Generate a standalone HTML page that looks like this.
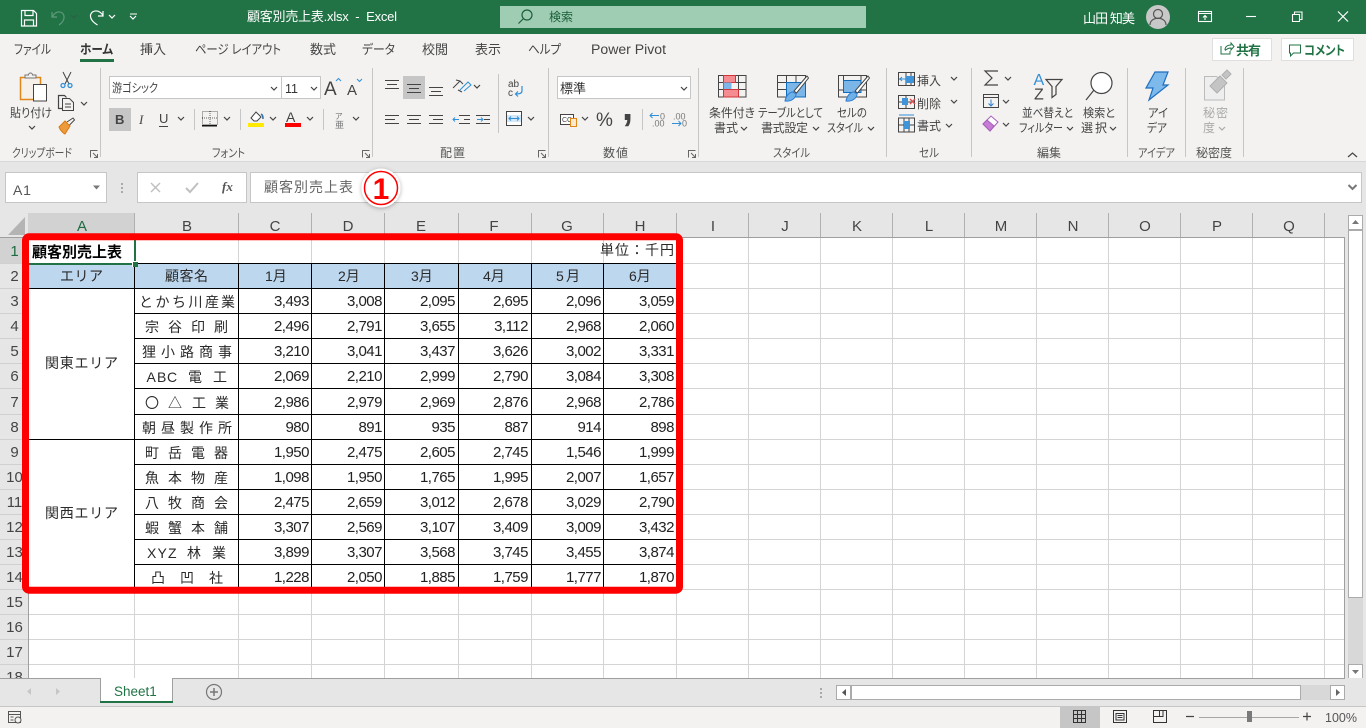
<!DOCTYPE html>
<html lang="ja"><head><meta charset="utf-8"><title>顧客別売上表.xlsx - Excel</title>
<style>
html,body{margin:0;padding:0;width:1366px;height:728px;overflow:hidden;background:#e6e6e6}
svg{display:block}
text{font-family:"Liberation Sans","Noto Sans CJK JP",sans-serif;font-feature-settings:"palt";white-space:pre}
.r{font-size:12px;fill:#444}
.g{font-size:12px;fill:#555}
.t{font-size:13px;fill:#444}
.n text{font-size:15px;letter-spacing:-.5px;fill:#222;text-anchor:end}
.c text{font-size:14px;fill:#2a2a2a;font-feature-settings:normal}
.h text{font-size:15px;fill:#444;text-anchor:middle}
.i{fill:none;stroke:#444;stroke-width:1}
</style></head><body>
<svg width="1366" height="728" viewBox="0 0 1366 728" xmlns="http://www.w3.org/2000/svg">
<defs>
<path id="c" d="M0 0l3 3 3-3" fill="none" stroke="#444" stroke-width="1.2"/>
<path id="cw" d="M0 0l3 3 3-3" fill="none" stroke="#fff" stroke-width="1.2"/>
<path id="dl" d="M.5 7.500v-7h7M3 3l4 4M7.500 4v3.500H4" fill="none" stroke="#666" stroke-width="1"/>
<filter id="sh" x="-30%" y="-30%" width="160%" height="160%"><feDropShadow dx="0" dy="1" stdDeviation="2" flood-color="#000" flood-opacity=".3"/></filter>
</defs>

<!-- title bar -->
<rect width="1366" height="34" fill="#217346"/>
<g fill="none" stroke="#fff" stroke-width="1.2">
<path d="M21.5 10.5h12l3 3v12.5h-15z M25 10.5v5h8v-5 M24.5 26v-6h9v6"/>
<path d="M52 12v5h5 M52.5 16.5C56 10 63 11 64 16c.5 4-2 7-5 9" stroke="#5f9a7c"/>
<path d="M103 11v5h-5 M103 15.5C99 9 92 10 90.500 15c-.5 5 4 8 7 10"/>
</g>
<use href="#c" x="71" y="15" opacity=".4"/><use href="#cw" x="109" y="15"/>
<path d="M130 14h7" stroke="#fff"/><use href="#cw" x="130" y="16"/>
<text x="247" y="21" font-size="13" fill="#fff" textLength="150" lengthAdjust="spacing">顧客別売上表.xlsx  -  Excel</text>
<rect x="500" y="6" width="366" height="22" fill="#9fcdb3"/>
<circle cx="527" cy="15" r="5" fill="none" stroke="#1b5e3a" stroke-width="1.200"/><path d="M523 19l-4.500 4.500" stroke="#1b5e3a" stroke-width="1.200"/>
<text x="549" y="21" font-size="12" fill="#1b5e3a">検索</text>
<text x="1083" y="23" font-size="13" fill="#fff" textLength="52">山田 知美</text>
<circle cx="1158" cy="17" r="12" fill="#c8c8c8"/>
<circle cx="1158" cy="14" r="4.500" fill="none" stroke="#555" stroke-width="1.200"/><path d="M1150 25c0-9 16-9 16 0" fill="none" stroke="#555" stroke-width="1.200"/>
<g fill="none" stroke="#fff" stroke-width="1.100">
<rect x="1198.500" y="11.500" width="13" height="10"/><path d="M1198.500 13.500h13M1205 20v-4M1203 17.500l2-2 2 2"/>
<path d="M1246 16.500h10"/>
<path d="M1292.500 14.500h7v7h-7zM1294.500 14.500v-2.500h7.500v7.500h-2.500"/>
<path d="M1338 11.500l10 10M1348 11.500l-10 10" stroke-width="1.200"/>
</g>

<!-- ribbon -->
<rect y="34" width="1366" height="127" fill="#f3f2f1"/>
<rect y="161" width="1366" height="52" fill="#e6e6e6"/>
<rect y="161" width="1366" height="1" fill="#d8d8d8"/>
<text x="14" y="54" class="t" textLength="37" lengthAdjust="spacingAndGlyphs">ファイル</text>
<text x="80" y="54" class="t" style="font-weight:700;fill:#333" textLength="33" lengthAdjust="spacingAndGlyphs">ホーム</text>
<rect x="80" y="59" width="34" height="3" fill="#217346"/>
<text x="140" y="54" class="t" textLength="26">挿入</text>
<text x="195" y="54" class="t" textLength="86" lengthAdjust="spacingAndGlyphs">ページ レイアウト</text>
<text x="310" y="54" class="t" textLength="26">数式</text>
<text x="362" y="54" class="t" textLength="33" lengthAdjust="spacingAndGlyphs">データ</text>
<text x="422" y="54" class="t" textLength="26">校閲</text>
<text x="475" y="54" class="t" textLength="26">表示</text>
<text x="528" y="54" class="t" textLength="33" lengthAdjust="spacingAndGlyphs">ヘルプ</text>
<text x="591" y="54" class="t" style="font-size:13.500px" textLength="75" lengthAdjust="spacingAndGlyphs">Power Pivot</text>
<g fill="#fff" stroke="#e1dfdd"><rect x="1212.500" y="38.500" width="59" height="22"/><rect x="1281.500" y="38.500" width="72" height="22"/></g>
<path d="M1221 46v8h9v-3M1225 50c0-3 2-5 6-5v-2l3 3.500-3 3.500v-2c-3 0-4 1-6 2.500" fill="none" stroke="#217346"/>
<text x="1236" y="55" font-size="13" font-weight="700" fill="#217346" textLength="25">共有</text>
<path d="M1289.500 45h11v8h-7l-3 3v-3h-1z" fill="none" stroke="#217346"/>
<text x="1304" y="55" font-size="13" font-weight="700" fill="#217346" textLength="41" lengthAdjust="spacingAndGlyphs">コメント</text>
<g fill="#c6c6c6"><rect x="100" y="68" width="1" height="89"/><rect x="372" y="68" width="1" height="89"/><rect x="548" y="68" width="1" height="89"/><rect x="698" y="68" width="1" height="89"/><rect x="886" y="68" width="1" height="89"/><rect x="971" y="68" width="1" height="89"/><rect x="1127" y="68" width="1" height="89"/><rect x="1185" y="68" width="1" height="89"/><rect x="1243" y="68" width="1" height="89"/>
<rect x="194" y="109" width="1" height="21"/><rect x="240" y="109" width="1" height="21"/><rect x="323" y="109" width="1" height="21"/><rect x="498" y="74" width="1" height="59"/><rect x="642" y="109" width="1" height="21"/></g>
<!-- group labels -->
<g class="gl">
<text x="12" y="157" class="g" textLength="60" lengthAdjust="spacingAndGlyphs">クリップボード</text>
<text x="212" y="157" class="g" textLength="33" lengthAdjust="spacingAndGlyphs">フォント</text>
<text x="440" y="157" class="g" textLength="25">配置</text>
<text x="603" y="157" class="g" textLength="25">数値</text>
<text x="773" y="157" class="g" textLength="37" lengthAdjust="spacingAndGlyphs">スタイル</text>
<text x="919" y="157" class="g" textLength="20" lengthAdjust="spacingAndGlyphs">セル</text>
<text x="1037" y="157" class="g" textLength="24">編集</text>
<text x="1138" y="157" class="g" textLength="37" lengthAdjust="spacingAndGlyphs">アイデア</text>
<text x="1196" y="157" class="g" textLength="36">秘密度</text>
</g>
<use href="#dl" x="90" y="150"/><use href="#dl" x="362" y="150"/><use href="#dl" x="538" y="150"/><use href="#dl" x="688" y="150"/>
<path d="M1348 157l4.500-4 4.500 4" fill="none" stroke="#444" stroke-width="1.200"/>

<!-- clipboard -->
<rect x="20.500" y="77.500" width="20" height="22" fill="#f6f0e8" stroke="#e0861a" stroke-width="1.500"/>
<path d="M25 77v-2h3.500a2 2 0 0 1 4 0H36v3H25z" fill="#f3f2f1" stroke="#777"/>
<rect x="33.500" y="84.500" width="13" height="16.500" fill="#fff" stroke="#444"/>
<text x="10" y="117" class="r" textLength="42" lengthAdjust="spacingAndGlyphs">貼り付け</text><use href="#c" x="29" y="126"/>
<path d="M63 72l6 12M71 72l-6 12" stroke="#444" fill="none"/><circle cx="63" cy="85.500" r="2" fill="none" stroke="#2f8fd8" stroke-width="1.300"/><circle cx="70" cy="85.500" r="2" fill="none" stroke="#2f8fd8" stroke-width="1.300"/>
<path d="M62 108.500h-3.500v-13h6l2 2" class="i" style="stroke-width:1.200"/><path d="M62.500 98.500h7l4 4v8h-11zM65 104h6M65 107h6" class="i"/><use href="#c" x="81" y="102"/>
<path d="M59 127l6-6 5 5-5 8c-2-1-5-4-6-7z" fill="#ed9a3c" stroke="#d87a10"/><path d="M67 122l6-4 1.500 2-5 5" fill="#f3f2f1" stroke="#444"/>

<!-- font -->
<rect x="109.500" y="76.500" width="172" height="22" fill="#fff" stroke="#c6c6c6"/><rect x="281.500" y="76.500" width="39" height="22" fill="#fff" stroke="#c6c6c6"/>
<text x="112" y="92" class="r" textLength="46" lengthAdjust="spacingAndGlyphs">游ゴシック</text><use href="#c" x="271" y="87"/>
<text x="285" y="93" font-size="12.500" fill="#333">11</text><use href="#c" x="311" y="87"/>
<text x="324" y="95" font-size="19" fill="#444">A</text><path d="M336 81l2.500-2.500 2.500 2.500" fill="none" stroke="#2f8fd8"/>
<text x="347" y="95" font-size="15" fill="#444">A</text><path d="M357 79l2.500 2.500 2.500-2.500" fill="none" stroke="#2f8fd8"/>
<rect x="109" y="108" width="22" height="23" fill="#c6c6c6"/>
<text x="115" y="124" font-size="13" font-weight="700" fill="#444">B</text>
<text x="139" y="124" font-size="13" font-style="italic" fill="#444" style="font-family:'Liberation Serif',serif">I</text>
<text x="159" y="123" font-size="13" fill="#444">U</text><rect x="159" y="126" width="9" height="1" fill="#444"/><use href="#c" x="178" y="117"/>
<rect x="202.500" y="111.500" width="15" height="13" fill="none" stroke="#666" stroke-dasharray="1 1"/><path d="M210 111v14M202 118h16" stroke="#666" stroke-dasharray="1 1"/><rect x="202" y="125" width="15" height="1.500" fill="#111"/><use href="#c" x="224" y="117"/>
<path d="M251 118l5-6 5 5-4 4h-3z" fill="#fff" stroke="#444"/><path d="M261 114c2 1 2 3 2 5" stroke="#2f6fb0" stroke-width="1.500" fill="none"/><rect x="248" y="123" width="16" height="4" fill="#ffea00"/><use href="#c" x="270" y="117"/>
<text x="286" y="122" font-size="14" fill="#444">A</text><rect x="285" y="123" width="16" height="4" fill="#f00"/><use href="#c" x="307" y="117"/>
<text x="335" y="119" font-size="8" fill="#777">ア</text><text x="335" y="128" font-size="9" fill="#777">亜</text><use href="#c" x="353" y="117"/>

<!-- alignment -->
<rect x="403" y="76" width="22" height="23" fill="#c6c6c6"/>
<g stroke="#444" fill="none">
<path d="M385 80.500h14M387 84.500h10M385 88.500h14"/><path d="M407 84.500h14M409 88.500h10M407 92.500h14"/><path d="M429 87.500h14M431 91.500h10M429 95.500h14"/>
<path d="M385 115.500h14M385 119.500h10M385 123.500h14"/><path d="M407 115.500h14M409 119.500h10M407 123.500h14"/><path d="M429 115.500h14M433 119.500h10M429 123.500h14"/>
<path d="M459 115.500h11M464 119.500h6M459 123.500h11M476 115.500h14M484 119.500h6M476 123.500h14"/>
<path d="M453 88l7-7M456 80l4 1 3 3M462 92l-4-2"/><path d="M460 90l8-8 3 3-7 6" stroke="#2f8fd8"/>
</g>
<path d="M453 119.500h6M455 117.500l-2 2 2 2M477 119.500h6M481 117.500l2 2-2 2" stroke="#2f8fd8" fill="none"/>
<use href="#c" x="474" y="85"/>
<text x="508" y="87" font-size="10" fill="#444">ab</text><text x="508" y="96" font-size="10" fill="#444">c</text><path d="M522 86v5c0 2-2 3-6 3M518 91.500l-2.500 2.500 2.500 2.500" fill="none" stroke="#2f8fd8" stroke-width="1.200"/>
<rect x="506.500" y="111.500" width="15" height="14" fill="#fff" stroke="#444"/><rect x="507" y="115" width="14" height="7" fill="#d5e8f7"/><path d="M509 118.500h10M511 116.500l-2 2 2 2M517 116.500l2 2-2 2" stroke="#2f8fd8" fill="none"/><use href="#c" x="528" y="117"/>

<!-- number -->
<rect x="557.500" y="76.500" width="133" height="22" fill="#fff" stroke="#c6c6c6"/>
<text x="560" y="93" font-size="13" fill="#333">標準</text><use href="#c" x="681" y="87"/>
<rect x="560.500" y="114.500" width="13" height="10" fill="#fff" stroke="#444"/><text x="562" y="122" font-size="7" fill="#444">CC</text>
<rect x="570.500" y="118.500" width="6" height="8" fill="#fbe9d0" stroke="#e0861a"/><use href="#c" x="582" y="117"/>
<text x="596" y="126" font-size="19" fill="#444">%</text>
<text x="622" y="120" font-size="40" font-weight="700" fill="#444">,</text>
<text x="660" y="119.500" font-size="9" fill="#777">0</text><text x="652" y="126.500" font-size="9" fill="#777">.00</text>
<path d="M650 115.500h9M652.500 113l-2.500 2.500 2.500 2.500" stroke="#2f8fd8" fill="none"/>
<text x="673" y="119.500" font-size="9" fill="#777">.00</text><text x="682" y="126.500" font-size="9" fill="#777">0</text>
<path d="M672 123.500h9M678.500 121l2.500 2.500-2.500 2.500" stroke="#2f8fd8" fill="none"/>

<!-- styles -->
<g class="i">
<path d="M718.500 75.500h27.500v21.500h-27.500z M718.500 82.500h27.500M718.500 89.500h27.500M723.500 75.500v21.500M731 75.500v21.500M738.500 75.500v21.500"/></g>
<rect x="723.500" y="75.500" width="12" height="7" fill="#f48c92" stroke="#d13438"/><rect x="723.500" y="82.500" width="8" height="7" fill="#7cb6e8"/><rect x="723.500" y="89.500" width="15" height="7.500" fill="#f48c92" stroke="#d13438"/>
<text x="709" y="117" class="r" textLength="46" lengthAdjust="spacingAndGlyphs">条件付き</text><text x="714" y="132" class="r" textLength="24">書式</text><use href="#c" x="741" y="127"/>
<g class="i"><path d="M777.500 75.500h28v21.500h-28zM777.500 82.500h28M777.500 89.500h28M786.500 75.500v21.500M796 75.500v21.500"/></g>
<rect x="786.500" y="82.500" width="19" height="14.500" fill="#7cb6e8" stroke="#0f6cbd"/>
<path d="M807 76l-13 15 2.500 2 12-15z" fill="#fff" stroke="#444"/><path d="M785 101c1-5 4-9 8-9l3 2c0 4-5 8-11 7z" fill="#6fb0e6" stroke="#2b7cd3"/>
<text x="758" y="117" class="r" textLength="65" lengthAdjust="spacingAndGlyphs">テーブルとして</text><text x="761" y="132" class="r" textLength="47">書式設定</text><use href="#c" x="813" y="127"/>
<g class="i"><path d="M838.500 75.500h28v21.500h-28z"/><path d="M838.500 90h28M843.500 75.500v5M861 75.500v5"/></g>
<rect x="843.500" y="80.500" width="17.500" height="12" fill="#7cb6e8" stroke="#0f6cbd"/>
<path d="M868 76l-13 15 2.500 2 12-15z" fill="#fff" stroke="#444"/><path d="M846 101c1-5 4-9 8-9l3 2c0 4-5 8-11 7z" fill="#6fb0e6" stroke="#2b7cd3"/>
<text x="837" y="117" class="r" textLength="30" lengthAdjust="spacingAndGlyphs">セルの</text><text x="827" y="132" class="r" textLength="36" lengthAdjust="spacingAndGlyphs">スタイル</text><use href="#c" x="868" y="127"/>

<!-- cells -->
<g class="i"><path d="M898.500 72.500h16v13h-16zM898.500 79h16M906 72.500v13M911 72.500v13"/><path d="M898.500 95.500h16v13h-16zM906 95.500v13M898.500 102h16" /><path d="M898.500 118h16v14h-16zM898.500 125h16M904 118v14M909 118v14"/></g>
<rect x="906" y="76" width="8" height="7" fill="#3f93d8"/><path d="M900 79h6M902 77l-2 2 2 2" stroke="#2f8fd8" fill="none"/>
<rect x="902" y="98" width="6" height="7" fill="#3f93d8"/><path d="M910 99l5 5M915 99l-5 5" stroke="#e04b4b" stroke-width="1.300"/>
<rect x="904" y="121" width="6" height="8" fill="#3f93d8"/><path d="M899 115h15" stroke="#2f8fd8"/>
<text x="917" y="85" class="r" textLength="24">挿入</text><use href="#c" x="951" y="77"/>
<text x="917" y="108" class="r" textLength="24">削除</text><use href="#c" x="951" y="100"/>
<text x="917" y="130" class="r" textLength="24">書式</text><use href="#c" x="946" y="124"/>

<!-- editing -->
<path d="M998 71h-13l7 7-7 7h13" class="i" style="stroke-width:1.200"/><use href="#c" x="1005" y="77"/>
<rect x="983.500" y="94.500" width="15" height="13" class="i"/><path d="M983.500 97.500h15" stroke="#444"/><path d="M991 99.500v6M988.500 103.500l2.500 2.500 2.500-2.500" stroke="#2f7fd0" fill="none"/><use href="#c" x="1003" y="100"/>
<path d="M983 124l8-8 7 6-8 9z" fill="#fff" stroke="#a65eb8"/><path d="M983 124l4-4 7 6-4 5z" fill="#c77dd6" stroke="#a65eb8"/><use href="#c" x="1003" y="123"/>
<text x="1033.500" y="85" font-size="16" fill="#2f8fd8">A</text><text x="1034" y="99.500" font-size="16" fill="#444">Z</text>
<path d="M1046 79.500h16l-6 7v8l-4 3v-11z" class="i" style="stroke-width:1.200"/>
<text x="1022" y="117" class="r" textLength="51" lengthAdjust="spacingAndGlyphs">並べ替えと</text><text x="1019" y="132" class="r" textLength="44" lengthAdjust="spacingAndGlyphs">フィルター</text><use href="#c" x="1067" y="127"/>
<circle cx="1101.500" cy="83" r="10.500" fill="#fff" stroke="#444" stroke-width="1.200"/><path d="M1094 90l-8 10" stroke="#444" stroke-width="1.200"/>
<text x="1083" y="117" class="r" textLength="32" lengthAdjust="spacingAndGlyphs">検索と</text><text x="1081" y="132" class="r" textLength="26">選択</text><use href="#c" x="1110" y="127"/>
<!-- ideas -->
<path d="M1155 72h13l-5 13h5l-19 15 4-12h-7z" fill="#7db9ea" stroke="#1f6fbf" stroke-width="1.200"/>
<text x="1148" y="117" class="r" textLength="20" lengthAdjust="spacingAndGlyphs">アイ</text><text x="1147" y="132" class="r" textLength="20" lengthAdjust="spacingAndGlyphs">デア</text>
<!-- sensitivity -->
<path d="M1204.500 76.500h12l8 8v15.500h-20z" fill="#eee" stroke="#bbb"/><path d="M1210 86l10-10 7 7-10 10zM1222 75l5-5 4 4-5 5z" fill="#c4c4c4" stroke="#b0b0b0"/>
<text x="1203" y="117" font-size="12" fill="#aaa" textLength="25">秘密</text><text x="1203" y="132" font-size="12" fill="#aaa">度</text>
<path d="M1219 127l3 3 3-3" fill="none" stroke="#aaa" stroke-width="1.200"/>

<!-- formula bar -->
<g fill="#fff" stroke="#c6c6c6"><rect x="5.500" y="172.500" width="101" height="30"/><rect x="137.500" y="172.500" width="109" height="30"/><rect x="250.500" y="172.500" width="1111" height="30"/></g>
<text x="13" y="195" font-size="14" fill="#555" letter-spacing=".8">A1</text>
<path d="M93 185.500h7l-3.500 4z" fill="#777"/>
<g fill="#aaa"><rect x="121" y="183" width="2" height="2"/><rect x="121" y="187" width="2" height="2"/><rect x="121" y="191" width="2" height="2"/></g>
<path d="M151 183l9 9M160 183l-9 9" stroke="#c0c0c0" stroke-width="1.500"/>
<path d="M186 188l4 4 8-9" fill="none" stroke="#c0c0c0" stroke-width="2"/>
<text x="222" y="191" font-size="13" font-weight="700" font-style="italic" fill="#555" style="font-family:'Liberation Serif',serif">fx</text>
<text x="264" y="192" font-size="14" fill="#666" textLength="89">顧客別売上表</text>
<path d="M1348.500 185l4 4 4-4" fill="none" stroke="#777" stroke-width="2"/>

<!-- sheet -->
<rect x="0" y="213" width="1348" height="465" fill="#e6e6e6"/>
<rect x="28" y="238" width="1317" height="440" fill="#fff"/>
<rect x="28" y="213" width="106" height="24" fill="#d2d2d2"/>
<rect x="0" y="238" width="28" height="25" fill="#d2d2d2"/>
<path d="M25 217v18H8z" fill="#b4b4b4"/>
<!-- gray grid -->
<g fill="#d4d4d4">
<rect x="134" y="589" width="1" height="89"/><rect x="238" y="238" width="1" height="440"/><rect x="311" y="238" width="1" height="440"/><rect x="384" y="238" width="1" height="440"/><rect x="458" y="238" width="1" height="440"/><rect x="531" y="238" width="1" height="440"/><rect x="603" y="238" width="1" height="440"/><rect x="676" y="238" width="1" height="440"/>
<rect x="748" y="238" width="1" height="440"/><rect x="820" y="238" width="1" height="440"/><rect x="892" y="238" width="1" height="440"/><rect x="964" y="238" width="1" height="440"/><rect x="1036" y="238" width="1" height="440"/><rect x="1108" y="238" width="1" height="440"/><rect x="1180" y="238" width="1" height="440"/><rect x="1252" y="238" width="1" height="440"/><rect x="1324" y="238" width="1" height="440"/>
<rect x="28" y="263" width="1316" height="1"/><rect x="28" y="288" width="1316" height="1"/><rect x="28" y="313" width="1316" height="1"/><rect x="28" y="338" width="1316" height="1"/><rect x="28" y="363" width="1316" height="1"/><rect x="28" y="388" width="1316" height="1"/><rect x="28" y="414" width="1316" height="1"/><rect x="28" y="439" width="1316" height="1"/><rect x="28" y="464" width="1316" height="1"/><rect x="28" y="489" width="1316" height="1"/><rect x="28" y="514" width="1316" height="1"/><rect x="28" y="539" width="1316" height="1"/><rect x="28" y="564" width="1316" height="1"/><rect x="28" y="589" width="1316" height="1"/><rect x="28" y="614" width="1316" height="1"/><rect x="28" y="639" width="1316" height="1"/><rect x="28" y="664" width="1316" height="1"/>
</g>
<rect x="29" y="289" width="105" height="150" fill="#fff"/><rect x="29" y="440" width="105" height="149" fill="#fff"/>
<rect x="29" y="264" width="647" height="24" fill="#bdd7ee"/>
<!-- black borders -->
<g fill="#000">
<rect x="135" y="263" width="541" height="1"/>
<rect x="29" y="288" width="647" height="1"/><rect x="134" y="313" width="542" height="1"/><rect x="134" y="338" width="542" height="1"/><rect x="134" y="363" width="542" height="1"/><rect x="134" y="388" width="542" height="1"/><rect x="134" y="414" width="542" height="1"/><rect x="29" y="439" width="647" height="1"/><rect x="134" y="464" width="542" height="1"/><rect x="134" y="489" width="542" height="1"/><rect x="134" y="514" width="542" height="1"/><rect x="134" y="539" width="542" height="1"/><rect x="134" y="564" width="542" height="1"/>
<rect x="134" y="264" width="1" height="325"/><rect x="238" y="264" width="1" height="325"/><rect x="311" y="264" width="1" height="325"/><rect x="384" y="264" width="1" height="325"/><rect x="458" y="264" width="1" height="325"/><rect x="531" y="264" width="1" height="325"/><rect x="603" y="264" width="1" height="325"/>
</g>
<!-- header separators -->
<g fill="#b0b0b0">
<rect x="134" y="213" width="1" height="24"/><rect x="238" y="213" width="1" height="24"/><rect x="311" y="213" width="1" height="24"/><rect x="384" y="213" width="1" height="24"/><rect x="458" y="213" width="1" height="24"/><rect x="531" y="213" width="1" height="24"/><rect x="603" y="213" width="1" height="24"/><rect x="676" y="213" width="1" height="24"/><rect x="748" y="213" width="1" height="24"/><rect x="820" y="213" width="1" height="24"/><rect x="892" y="213" width="1" height="24"/><rect x="964" y="213" width="1" height="24"/><rect x="1036" y="213" width="1" height="24"/><rect x="1108" y="213" width="1" height="24"/><rect x="1180" y="213" width="1" height="24"/><rect x="1252" y="213" width="1" height="24"/><rect x="1324" y="213" width="1" height="24"/>
</g>
<g fill="#d0d0d0"><rect y="263" width="28" height="1"/><rect y="288" width="28" height="1"/><rect y="313" width="28" height="1"/><rect y="338" width="28" height="1"/><rect y="363" width="28" height="1"/><rect y="388" width="28" height="1"/><rect y="414" width="28" height="1"/><rect y="439" width="28" height="1"/><rect y="464" width="28" height="1"/><rect y="489" width="28" height="1"/><rect y="514" width="28" height="1"/><rect y="539" width="28" height="1"/><rect y="564" width="28" height="1"/><rect y="589" width="28" height="1"/><rect y="614" width="28" height="1"/><rect y="639" width="28" height="1"/><rect y="664" width="28" height="1"/></g>
<g fill="#9f9f9f"><rect x="0" y="237" width="1345" height="1"/><rect x="28" y="237" width="1" height="441"/><rect x="1344" y="237" width="1" height="441"/></g>
<rect x="29" y="236" width="105" height="2" fill="#217346"/>
<rect x="0" y="238" width="28" height="25" fill="#d2d2d2"/><rect x="27" y="238" width="2" height="25" fill="#217346"/>
<!-- column headers -->
<g class="h">
<text x="82" y="231" style="fill:#1f6b42">A</text><text x="187" y="231">B</text><text x="275" y="231">C</text><text x="348" y="231">D</text><text x="421" y="231">E</text><text x="494" y="231">F</text><text x="567" y="231">G</text><text x="640" y="231">H</text><text x="713" y="231">I</text><text x="785" y="231">J</text><text x="857" y="231">K</text><text x="929" y="231">L</text><text x="1001" y="231">M</text><text x="1073" y="231">N</text><text x="1145" y="231">O</text><text x="1217" y="231">P</text><text x="1289" y="231">Q</text>
<text x="14.500" y="256" style="fill:#1f6b42">1</text><text x="14.500" y="281">2</text><text x="14.500" y="306">3</text><text x="14.500" y="331">4</text><text x="14.500" y="356">5</text><text x="14.500" y="381">6</text><text x="14.500" y="407">7</text><text x="14.500" y="432">8</text><text x="14.500" y="457">9</text><text x="14.500" y="482">10</text><text x="14.500" y="507">11</text><text x="14.500" y="532">12</text><text x="14.500" y="557">13</text><text x="14.500" y="582">14</text><text x="14.500" y="607">15</text><text x="14.500" y="632">16</text><text x="14.500" y="657">17</text><text x="14.500" y="682">18</text>
</g>
<!-- cells -->
<g class="c">
<text x="32" y="257" style="font-size:15px;font-weight:700;fill:#000">顧客別売上表</text>
<text x="600" y="255" textLength="74">単位：千円</text>
<text x="60" y="281" textLength="43">エリア</text>
<text x="165" y="281" textLength="43">顧客名</text>
<text x="265" y="281">1月</text><text x="338" y="281">2月</text><text x="411" y="281">3月</text><text x="483" y="281">4月</text><text x="556" y="281" textLength="24">5 月</text><text x="629" y="281">6月</text>
<text x="45" y="368" textLength="73">関東エリア</text>
<text x="45" y="518" textLength="73">関西エリア</text>
<text x="139 155.500 172 188.500 205 221" y="307">とかち川産業</text>
<text x="145 168 191 214" y="332">宗谷印刷</text>
<text x="142 161 180 199 218" y="357">狸小路商事</text>
<text x="146.500 157 167 188 213" y="382">ABC電工</text>
<text x="145 168 192 215" y="408">〇△工業</text>
<text x="142 161 180 199 218" y="433">朝昼製作所</text>
<text x="145 168 191 214" y="458">町岳電器</text>
<text x="145 168 191 214" y="483">魚本物産</text>
<text x="145 168 191 214" y="508">八牧商会</text>
<text x="145 168 191 214" y="533">蝦蟹本舗</text>
<text x="147 157.500 168 187 212" y="558">XYZ林業</text>
<text x="151 180 209" y="583">凸凹社</text>
</g>
<g class="n">
<g transform="translate(-1,306)"><text x="310">3,493</text><text x="383">3,008</text><text x="456">2,095</text><text x="529">2,695</text><text x="602">2,096</text><text x="675">3,059</text></g>
<g transform="translate(-1,331)"><text x="310">2,496</text><text x="383">2,791</text><text x="456">3,655</text><text x="529">3,112</text><text x="602">2,968</text><text x="675">2,060</text></g>
<g transform="translate(-1,356)"><text x="310">3,210</text><text x="383">3,041</text><text x="456">3,437</text><text x="529">3,626</text><text x="602">3,002</text><text x="675">3,331</text></g>
<g transform="translate(-1,381)"><text x="310">2,069</text><text x="383">2,210</text><text x="456">2,999</text><text x="529">2,790</text><text x="602">3,084</text><text x="675">3,308</text></g>
<g transform="translate(-1,407)"><text x="310">2,986</text><text x="383">2,979</text><text x="456">2,969</text><text x="529">2,876</text><text x="602">2,968</text><text x="675">2,786</text></g>
<g transform="translate(-1,432)"><text x="310">980</text><text x="383">891</text><text x="456">935</text><text x="529">887</text><text x="602">914</text><text x="675">898</text></g>
<g transform="translate(-1,457)"><text x="310">1,950</text><text x="383">2,475</text><text x="456">2,605</text><text x="529">2,745</text><text x="602">1,546</text><text x="675">1,999</text></g>
<g transform="translate(-1,482)"><text x="310">1,098</text><text x="383">1,950</text><text x="456">1,765</text><text x="529">1,995</text><text x="602">2,007</text><text x="675">1,657</text></g>
<g transform="translate(-1,507)"><text x="310">2,475</text><text x="383">2,659</text><text x="456">3,012</text><text x="529">2,678</text><text x="602">3,029</text><text x="675">2,790</text></g>
<g transform="translate(-1,532)"><text x="310">3,307</text><text x="383">2,569</text><text x="456">3,107</text><text x="529">3,409</text><text x="602">3,009</text><text x="675">3,432</text></g>
<g transform="translate(-1,557)"><text x="310">3,899</text><text x="383">3,307</text><text x="456">3,568</text><text x="529">3,745</text><text x="602">3,455</text><text x="675">3,874</text></g>
<g transform="translate(-1,582)"><text x="310">1,228</text><text x="383">2,050</text><text x="456">1,885</text><text x="529">1,759</text><text x="602">1,777</text><text x="675">1,870</text></g>
</g>
<!-- selection -->
<rect x="134" y="240" width="2" height="24" fill="#217346"/><rect x="29" y="263" width="106" height="2" fill="#217346"/>
<rect x="132" y="261" width="6" height="6" fill="#fff"/><rect x="133" y="262" width="5" height="5" fill="#217346"/>
<!-- red frame -->
<rect x="25.500" y="236.800" width="654" height="353.400" rx="3.500" fill="none" stroke="#f00" stroke-width="7"/>
<!-- callout -->
<circle cx="381" cy="188" r="19.500" fill="#fff" filter="url(#sh)"/>
<circle cx="381" cy="188" r="16.500" fill="#fff" stroke="#f00" stroke-width="1.500"/>
<text x="381" y="199" font-size="30" font-weight="700" fill="#f00" text-anchor="middle">1</text>

<!-- vertical scrollbar -->
<rect x="1345" y="213" width="21" height="493" fill="#e6e6e6"/>
<rect x="1348" y="230" width="15" height="434" fill="#d8d8d8"/>
<rect x="1348.500" y="215.500" width="14" height="14" fill="#fff" stroke="#ababab"/>
<path d="M1352 224h7l-3.500-4z" fill="#777"/>
<rect x="1348.500" y="230.500" width="14" height="367" fill="#fff" stroke="#ababab"/>
<rect x="1348.500" y="664.500" width="14" height="14" fill="#fff" stroke="#ababab"/>
<path d="M1352 670h7l-3.500 4z" fill="#777"/>

<!-- tabs -->
<rect x="0" y="678" width="1366" height="28" fill="#e6e6e6"/>
<rect x="0" y="678" width="1345" height="1" fill="#9f9f9f"/>
<path d="M31 688v7l-4-3.500zM56 688v7l4-3.500z" fill="#c6c6c6"/>
<rect x="100" y="678" width="73" height="25" fill="#fff"/>
<rect x="100" y="678" width="1" height="25" fill="#9f9f9f"/><rect x="172" y="678" width="1" height="25" fill="#9f9f9f"/>
<rect x="100" y="701" width="73" height="2" fill="#217346"/>
<text x="114" y="696" font-size="13.500" fill="#217346">Sheet1</text>
<circle cx="214" cy="692" r="7.500" fill="none" stroke="#777" stroke-width="1.200"/><path d="M210 692h8M214 688v8" stroke="#777" stroke-width="1.500"/>
<g fill="#aaa"><rect x="820" y="688" width="2" height="2"/><rect x="820" y="692" width="2" height="2"/><rect x="820" y="696" width="2" height="2"/></g>
<rect x="836.500" y="685.500" width="14" height="14" fill="#fff" stroke="#ababab"/><path d="M846 689v7l-4-3.500z" fill="#555"/>
<rect x="851" y="685" width="479" height="15" fill="#d8d8d8"/>
<rect x="851.500" y="685.500" width="449" height="14" fill="#fff" stroke="#ababab"/>
<rect x="1330.500" y="685.500" width="14" height="14" fill="#fff" stroke="#ababab"/><path d="M1336 689v7l4-3.500z" fill="#666"/>

<!-- status -->
<rect x="0" y="706" width="1366" height="22" fill="#f3f2f1"/>
<rect x="0" y="706" width="1366" height="1" fill="#c6c6c6"/>
<g fill="none" stroke="#555"><rect x="8.500" y="711.500" width="12" height="11"/><path d="M8.500 714.500h12M10.500 717h3M10.500 720h3"/><circle cx="18" cy="720" r="3" fill="#f3f2f1"/></g>
<rect x="1060" y="707" width="40" height="21" fill="#c6c6c6"/>
<g fill="none" stroke="#333"><path d="M1073.500 710.500h12v12h-12zM1073.500 714.500h12M1073.500 718.500h12M1077.500 710.500v12M1081.500 710.500v12"/>
<rect x="1113.500" y="710.500" width="13" height="12"/><path d="M1116 713.500h8v6.500h-8zM1117.500 715.500h5M1117.500 717.500h5"/>
<path d="M1153.500 710.500h13v12h-13zM1153.500 716.500h6v-6M1159.500 716.500v-6M1163 710.500v6h-3.500"/></g>
<path d="M1186 716.500h8M1303 716.500h8M1307 712.500v8" stroke="#444" stroke-width="1.200"/>
<rect x="1199" y="717" width="100" height="1" fill="#a6a6a6"/>
<rect x="1247" y="711" width="5" height="11" fill="#7a7a7a"/>
<text x="1325" y="722" font-size="12.500" fill="#555">100%</text>
</svg>
</body></html>
